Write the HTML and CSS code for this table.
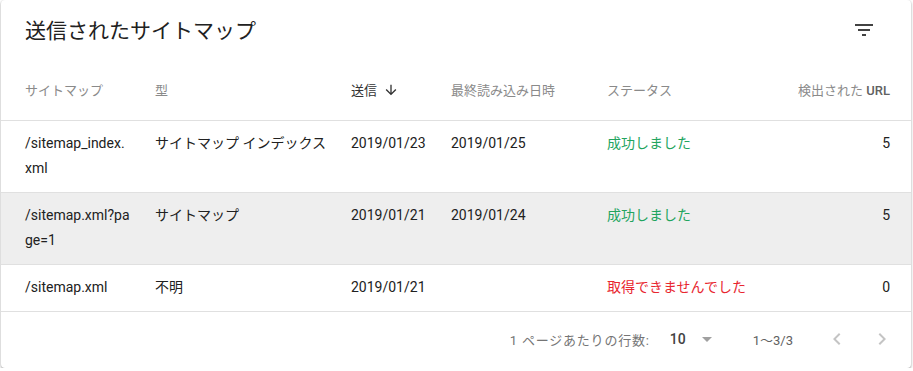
FILE: index.html
```html
<!DOCTYPE html>
<html lang="ja">
<head>
<meta charset="utf-8">
<title>送信されたサイトマップ</title>
<link rel="stylesheet" href="styles.css">
</head>
<body>
<div class="card">
  <div class="card-head">
    <h1 class="title">送信されたサイトマップ</h1>
    <button class="icon-btn filter" aria-label="フィルタ">
      <svg viewBox="0 0 24 24" width="24" height="24"><path d="M10 18h4v-2h-4v2zM3 6v2h18V6H3zm3 7h12v-2H6v2z"/></svg>
    </button>
  </div>
  <table class="grid">
    <colgroup>
      <col class="c1"><col class="c2"><col class="c3"><col class="c4"><col class="c5"><col class="c6">
    </colgroup>
    <thead>
      <tr>
        <th class="first">サイトマップ</th>
        <th>型</th>
        <th class="sorted">送信<svg class="sort" viewBox="0 0 24 24" width="16" height="16"><path d="M20 12l-1.41-1.41L13 16.17V4h-2v12.17l-5.58-5.59L4 12l8 8 8-8z"/></svg></th>
        <th>最終読み込み日時</th>
        <th>ステータス</th>
        <th class="num last">検出された <span class="latin">URL</span></th>
      </tr>
    </thead>
    <tbody>
      <tr>
        <td class="first"><span class="path">/sitemap_index.xml</span></td>
        <td>サイトマップ インデックス</td>
        <td>2019/01/23</td>
        <td>2019/01/25</td>
        <td class="ok">成功しました</td>
        <td class="num last">5</td>
      </tr>
      <tr class="hover">
        <td class="first"><span class="path">/sitemap.xml?page=1</span></td>
        <td>サイトマップ</td>
        <td>2019/01/21</td>
        <td>2019/01/24</td>
        <td class="ok">成功しました</td>
        <td class="num last">5</td>
      </tr>
      <tr>
        <td class="first"><span class="path">/sitemap.xml</span></td>
        <td>不明</td>
        <td>2019/01/21</td>
        <td></td>
        <td class="err">取得できませんでした</td>
        <td class="num last">0</td>
      </tr>
    </tbody>
  </table>
  <div class="pager">
    <span class="rows-label">1 ページあたりの行数:</span>
    <span class="rows-select"><span class="rows-value">10</span><svg class="drop" viewBox="0 0 24 24" width="24" height="24"><path d="M7 10l5 5 5-5z"/></svg></span>
    <span class="range">1〜3/3</span>
    <button class="icon-btn nav" aria-label="前へ"><svg viewBox="0 0 24 24" width="24" height="24"><path d="M15.41 7.41L14 6l-6 6 6 6 1.41-1.41L10.83 12z"/></svg></button>
    <button class="icon-btn nav" aria-label="次へ"><svg viewBox="0 0 24 24" width="24" height="24"><path d="M10 6L8.59 7.41 13.17 12l-4.58 4.59L10 18l6-6z"/></svg></button>
  </div>
</div>
</body>
</html>
```

FILE: styles.css
```css
* { box-sizing: border-box; }
html, body { margin: 0; padding: 0; background: #ffffff; }
body {
  font-family: Roboto, "Noto Sans CJK JP", sans-serif;
  color: #212121;
  font-size: 14px;
}
.card {
  margin-left: 1px;
  width: 910px;
  height: 368px;
  background: #fff;
  border-radius: 4px;
  box-shadow: 0 1px 2px rgba(0,0,0,0.28), 0 1px 3px 1px rgba(0,0,0,0.10);
  overflow: hidden;
}
.card-head {
  height: 60px;
  display: flex;
  align-items: center;
  justify-content: space-between;
  padding: 2px 35px 0 24px;
}
.title {
  margin: 0;
  font-size: 21px;
  font-weight: 400;
  line-height: 28px;
  color: #212121;
}
.icon-btn {
  border: 0;
  background: none;
  padding: 0;
  margin: 0;
  width: 24px;
  height: 24px;
  display: flex;
}
.filter { fill: #424242; margin-top: -2px; }

.grid {
  width: 100%;
  table-layout: fixed;
  border-collapse: collapse;
}
.c1 { width: 154px; }
.c2 { width: 196px; }
.c3 { width: 100px; }
.c4 { width: 156px; }
.c5 { width: 190px; }
.grid tr { border-bottom: 1px solid #e0e0e0; }
.grid th {
  height: 60px;
  padding: 0;
  text-align: left;
  font-size: 13px;
  font-weight: 400;
  color: #8a8a8a;
  vertical-align: middle;
  white-space: nowrap;
}
.grid th.sorted { color: #333; }
.sort { fill: #333; vertical-align: -3px; margin-left: 6px; }
.latin { font-weight: 500; color: #616161; }
.grid td {
  padding: 10px 0 11px 0;
  line-height: 25px;
  vertical-align: top;
  color: #212121;
}
.grid .first { padding-left: 24px; }
.grid .num { text-align: right; }
.grid .last { padding-right: 21px; }
.path {
  display: block;
  width: 105px;
  word-break: break-all;
}
.grid tr.hover { background: #eeeeee; }
.grid td.ok { color: #22a45e; }
.grid td.err { color: #e8262f; }

.pager {
  height: 55px;
  display: flex;
  align-items: center;
  justify-content: flex-end;
  padding-right: 17px;
  font-size: 13px;
  color: #757575;
}
.rows-label { margin-right: 20px; letter-spacing: 0.8px; }
.rows-select { display: flex; align-items: center; }
.rows-value { font-size: 14px; font-weight: 500; color: #424242; margin-right: 9px; }
.drop { fill: #a0a0a0; }
.range { margin-left: 34px; margin-right: 32px; color: #616161; }
.nav { fill: #c4c4c4; }
.nav + .nav { margin-left: 21px; }
```
